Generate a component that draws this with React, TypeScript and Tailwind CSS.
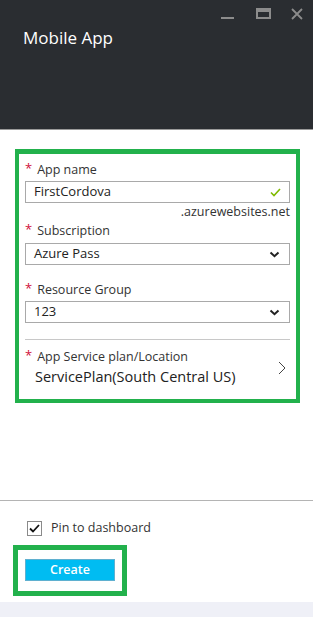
import React from 'react';

const font = { fontFamily: '"Open Sans", "Noto Sans", sans-serif' };

function Label({ text }: { text: string }) {
  return (
    <div className="flex items-center h-[16px] text-[12.5px] text-[#333]">
      <span className="text-[#d0103a] text-[13px] leading-none mr-[5px] relative top-[-2px]">*</span>
      {text}
    </div>
  );
}

function Chevron() {
  return (
    <svg width="11" height="7" viewBox="0 0 11 7">
      <path d="M1.5 1.5 L5.5 5.2 L9.5 1.5" stroke="#222" strokeWidth="2" fill="none" />
    </svg>
  );
}

function SelectBox({ value }: { value: string }) {
  return (
    <div className="h-[22px] border border-[#a9a9a9] flex items-center justify-between pl-[8px] pr-[9px] text-[13px] text-[#222]">
      <span>{value}</span>
      <Chevron />
    </div>
  );
}

export default function App() {
  return (
    <div className="w-[313px] h-[617px] bg-white flex flex-col overflow-hidden" style={font}>
      <header className="h-[130px] bg-[#2a2d31] border-b border-[#9a9a9a] flex flex-col shrink-0">
        <div className="flex justify-end items-start pr-[10px] pt-[8px] h-[22px]">
          <svg width="14" height="12" viewBox="0 0 14 12" className="mr-[21px]">
            <path d="M0 10 H13" stroke="#8c8c8c" strokeWidth="2" />
          </svg>
          <svg width="15" height="11" viewBox="0 0 15 11" className="mr-[20px]">
            <rect x="1" y="1" width="13" height="9" stroke="#8c8c8c" strokeWidth="2" fill="none" />
            <path d="M1 2.5 H14" stroke="#8c8c8c" strokeWidth="3" />
          </svg>
          <svg width="12" height="12" viewBox="0 0 12 12">
            <path d="M1 1 L11 11 M11 1 L1 11" stroke="#8c8c8c" strokeWidth="1.8" />
          </svg>
        </div>
        <h1 className="pl-[23px] mt-[4px] text-[17px] text-white font-normal leading-[24px]">Mobile App</h1>
      </header>

      <div className="mt-[19px] mx-[15px] w-[285px] h-[254px] border-[4px] border-t-[5px] border-[#22b14c] px-[6px] pt-[8px]">
        <Label text="App name" />
        <div className="mt-[3px] h-[22px] border border-[#a9a9a9] flex items-center justify-between pl-[8px] pr-[8px] text-[13px] text-[#222]">
          <span>FirstCordova</span>
          <svg width="11" height="9" viewBox="0 0 11 9">
            <path d="M1 4.5 L4 7.5 L10 1" stroke="#7fba00" strokeWidth="1.6" fill="none" />
          </svg>
        </div>
        <div className="text-right text-[12.5px] text-[#333] leading-[16px] mt-[1px]">.azurewebsites.net</div>
        <div className="mt-[3px]">
          <Label text="Subscription" />
        </div>
        <div className="mt-[4px]">
          <SelectBox value="Azure Pass" />
        </div>
        <div className="mt-[17px]">
          <Label text="Resource Group" />
        </div>
        <div className="mt-[3px]">
          <SelectBox value="123" />
        </div>
        <div className="mt-[16px] border-t border-[#c8c8c8]" />
        <div className="mt-[9px] flex items-center justify-between pr-[4px]">
          <div>
            <Label text="App Service plan/Location" />
            <div className="text-[14.5px] text-[#222] leading-[20px] mt-[2px] pl-[10px]">ServicePlan(South Central US)</div>
          </div>
          <svg width="8" height="14" viewBox="0 0 8 14">
            <path d="M1 1 L7 7 L1 13" stroke="#444" strokeWidth="1" fill="none" />
          </svg>
        </div>
      </div>

      <div className="flex-1" />

      <div className="h-[102px] border-t border-[#b4b4b4] shrink-0 flex flex-col">
        <div className="mt-[19px] pl-[27px] h-[16px] flex items-center gap-[9px]">
          <div className="w-[15px] h-[15px] border border-[#8a8a8a] flex items-center justify-center">
            <svg width="11" height="9" viewBox="0 0 11 9">
              <path d="M1 4.5 L4 7.5 L10 1" stroke="#111" strokeWidth="1.8" fill="none" />
            </svg>
          </div>
          <span className="text-[12.5px] text-[#333]">Pin to dashboard</span>
        </div>
        <div className="mt-[9px] ml-[13px] w-[114px] h-[51px] border-[5px] border-[#22b14c] pl-[7px] pt-[9px] flex items-start">
          <button className="w-[90px] h-[22px] bg-[#00bcf2] border border-[#5fb0d0] text-white text-[12.5px] font-semibold leading-none">
            Create
          </button>
        </div>
      </div>

      <div className="h-[15px] bg-[#eff0f7] shrink-0" />
    </div>
  );
}
